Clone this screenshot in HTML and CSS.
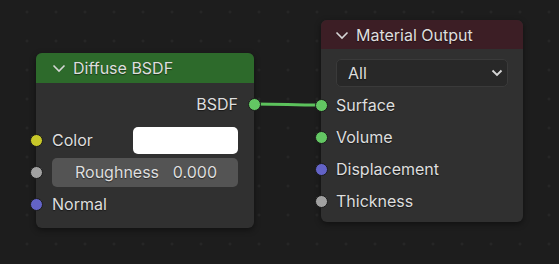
FILE: index.html
```html
<!DOCTYPE html>
<html lang="en">
<head>
    <meta charset="UTF-8">
    <title>Shader Nodes</title>
    <link rel="stylesheet" href="styles.css">
</head>
<body>
    <div class="canvas">
        <svg class="links" width="559" height="264">
            <path d="M254 104 C 285 104, 290 105, 321 105" class="link"/>
        </svg>

        <div class="node diffuse">
            <div class="node-header">
                <svg class="chevron" width="14" height="10" viewBox="0 0 14 10"><polyline points="1.5,2.5 7,8 12.5,2.5"/></svg>
                <span>Diffuse BSDF</span>
            </div>
            <div class="node-body">
                <div class="row output">
                    <span>BSDF</span>
                    <i class="socket out green"></i>
                </div>
                <div class="row">
                    <i class="socket in yellow"></i>
                    <span class="label">Color</span>
                    <div class="color-field"></div>
                </div>
                <div class="row">
                    <i class="socket in grey"></i>
                    <div class="slider">
                        <span>Roughness</span>
                        <span>0.000</span>
                    </div>
                </div>
                <div class="row">
                    <i class="socket in blue"></i>
                    <span class="label">Normal</span>
                </div>
            </div>
        </div>

        <div class="node output-node">
            <div class="node-header">
                <svg class="chevron" width="14" height="10" viewBox="0 0 14 10"><polyline points="1.5,2.5 7,8 12.5,2.5"/></svg>
                <span>Material Output</span>
            </div>
            <div class="node-body">
                <div class="dropdown">
                    <span>All</span>
                    <svg width="12" height="8" viewBox="0 0 12 8"><polyline points="1.5,1.5 6,6 10.5,1.5"/></svg>
                </div>
                <div class="row">
                    <i class="socket in green"></i>
                    <span class="label">Surface</span>
                </div>
                <div class="row">
                    <i class="socket in green"></i>
                    <span class="label">Volume</span>
                </div>
                <div class="row">
                    <i class="socket in blue"></i>
                    <span class="label">Displacement</span>
                </div>
                <div class="row">
                    <i class="socket in grey"></i>
                    <span class="label">Thickness</span>
                </div>
            </div>
        </div>
    </div>
</body>
</html>
```

FILE: styles.css
```css
body {
    margin: 0;
    background-color: #1d1d1d;
    font-family: Inter, "Noto Sans", sans-serif;
    font-size: 16px;
    color: #dedede;
}

.canvas {
    position: relative;
    width: 559px;
    height: 264px;
    overflow: hidden;
    background-color: #1d1d1d;
    background-image: radial-gradient(circle, #282828 1px, transparent 1.5px);
    background-size: 29px 29px;
    background-position: 12.5px -2.5px;
}

.links {
    position: absolute;
    left: 0;
    top: 0;
}

.link {
    fill: none;
    stroke: #5cc25c;
    stroke-width: 3;
}

.node {
    position: absolute;
    background-color: #303030;
    border-radius: 6px;
    box-shadow: 0 2px 6px rgba(0,0,0,0.45);
    text-shadow: 0 1px 1px rgba(0,0,0,0.5);
}

.diffuse {
    left: 36px;
    top: 53px;
    width: 218px;
    height: 175px;
}

.output-node {
    left: 321px;
    top: 20px;
    width: 202px;
    height: 202px;
}

.node-header {
    display: flex;
    align-items: center;
    gap: 7px;
    height: 30px;
    padding-left: 15px;
    border-radius: 6px 6px 0 0;
    box-sizing: border-box;
}

.diffuse .node-header {
    background-color: #2d6a2b;
    padding-left: 16px;
}

.output-node .node-header {
    background-color: #3c1e25;
    height: 29px;
    padding-left: 14px;
}

.chevron polyline,
.dropdown polyline {
    fill: none;
    stroke: #d6d6d6;
    stroke-width: 1.6;
}

.dropdown polyline {
    stroke-width: 1.9;
}

.node-body {
    padding: 5px 16px 8px 16px;
}

.output-node .node-body {
    padding: 10px 15px 5px 15px;
}

.row {
    position: relative;
    display: flex;
    align-items: center;
    height: 32px;
}

.row.output {
    justify-content: flex-end;
    margin-bottom: 4px;
}

.socket {
    position: absolute;
    width: 11px;
    height: 11px;
    border-radius: 50%;
    border: 1px solid #1a1a1a;
    top: 9.5px;
}

.socket.in {
    left: -22.5px;
}

.output-node .socket.in {
    left: -21.5px;
}

.socket.out {
    right: -22.5px;
}

.green { background-color: #63c763; }
.yellow { background-color: #c7c729; }
.grey { background-color: #a1a1a1; }
.blue { background-color: #6363c7; }

.label {
    flex: 1;
}

.color-field {
    width: 105px;
    height: 27px;
    background-color: #ffffff;
    border-radius: 5px;
}

.slider {
    flex: 1;
    display: flex;
    justify-content: space-between;
    align-items: center;
    height: 29px;
    padding: 0 21px 0 23px;
    background-color: #545454;
    border-radius: 5px;
}

.dropdown {
    display: flex;
    align-items: center;
    justify-content: space-between;
    height: 28px;
    margin-bottom: 2px;
    padding: 0 4px 0 11px;
    background-color: #282828;
    border: 1px solid #3a3a3a;
    border-radius: 5px;
    box-sizing: border-box;
}
```
